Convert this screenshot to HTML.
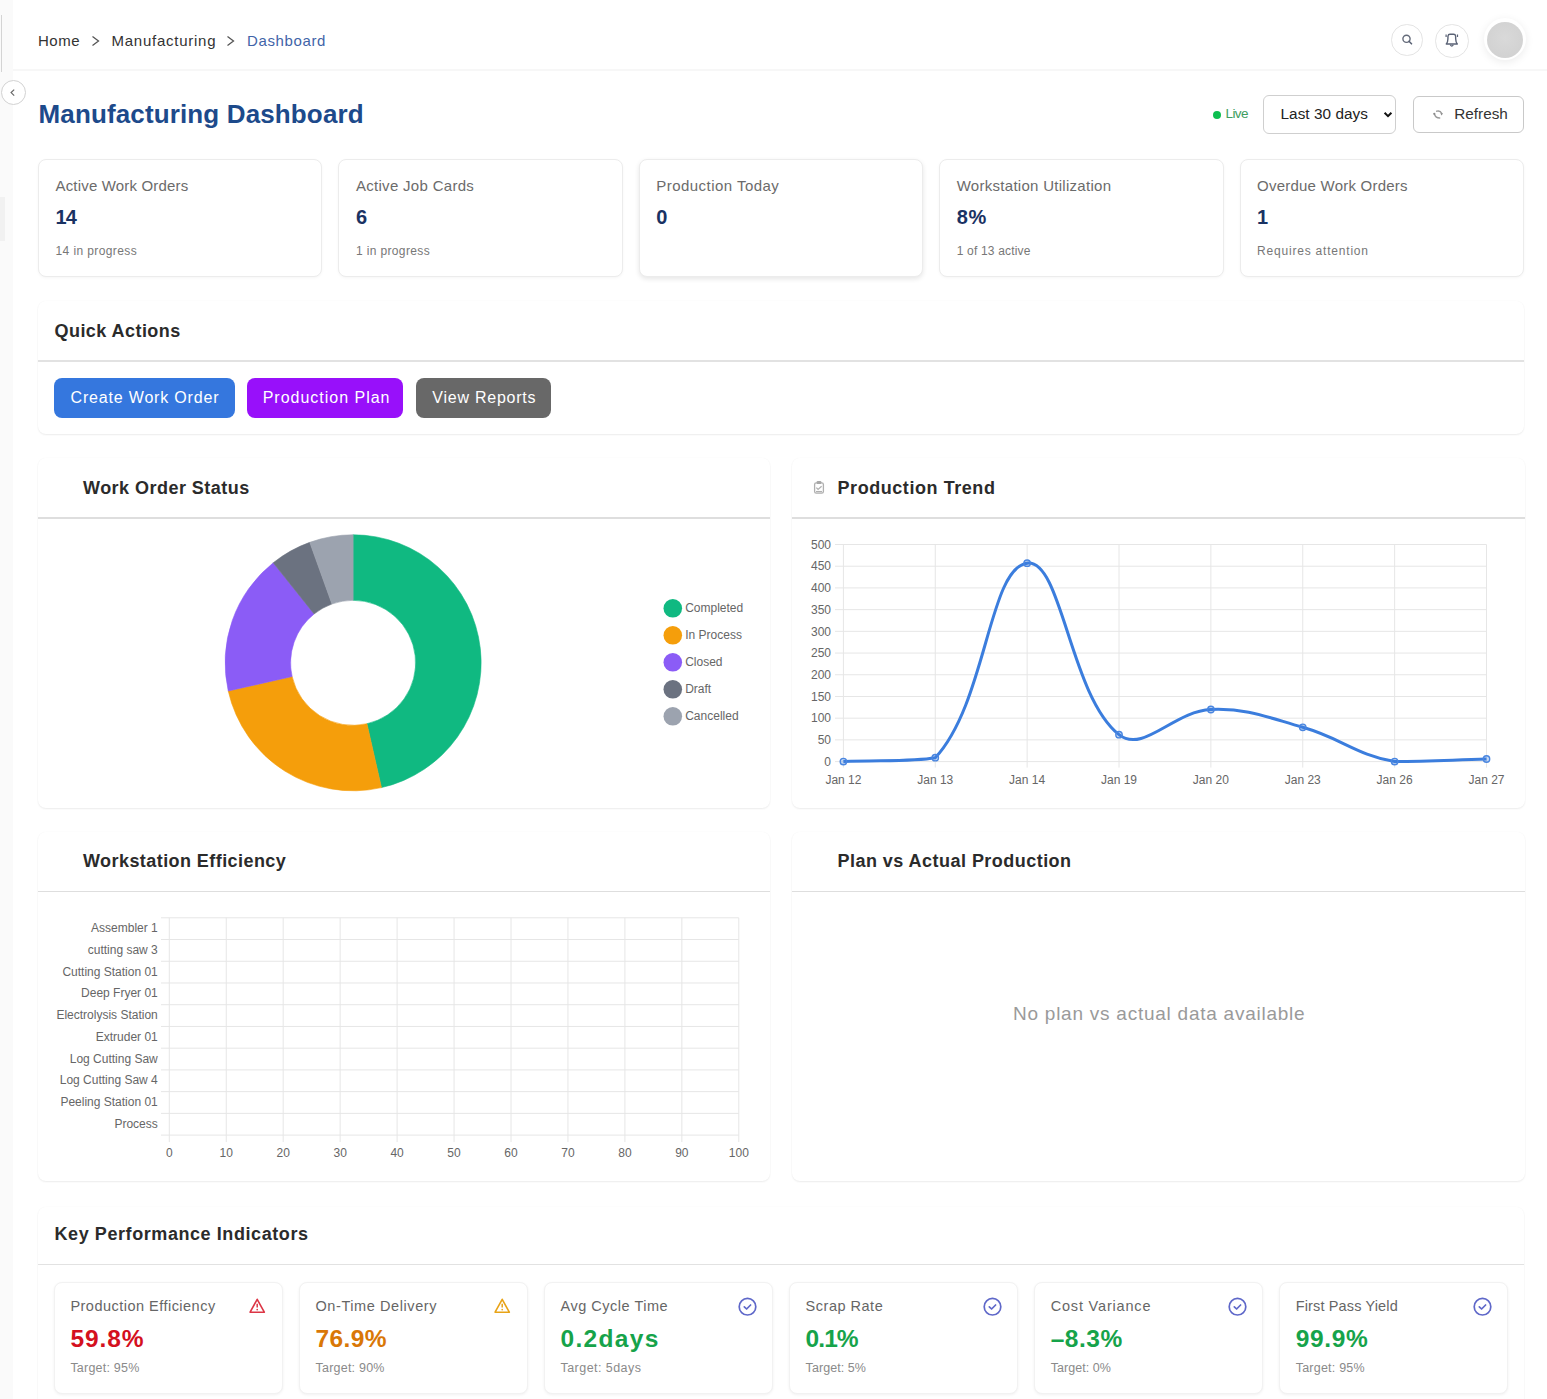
<!DOCTYPE html>
<html><head><meta charset="utf-8"><title>Manufacturing Dashboard</title>
<style>
html,body{margin:0;padding:0;}
body{width:1547px;height:1399px;position:relative;overflow:hidden;background:#fff;font-family:"Liberation Sans", sans-serif;}
.t{position:absolute;line-height:1;white-space:nowrap;}
</style></head><body>
<div style="position:absolute;left:0px;top:0px;width:13.4px;height:1399px;background:#fafafa;"></div>
<div style="position:absolute;left:1px;top:15px;width:1px;height:57px;background:#d4d4d4;"></div>
<div style="position:absolute;left:0px;top:197px;width:5.4px;height:44px;background:#f1f1f1;"></div>
<div style="position:absolute;left:13px;top:69px;width:1534px;height:2px;background:#f7f7f7;"></div>
<div class="t" style="left:38.00px;top:32.80px;font-size:15px;font-weight:400;color:#333;letter-spacing:0.533px;">Home</div>
<div class="t" style="left:111.50px;top:32.80px;font-size:15px;font-weight:400;color:#333;letter-spacing:0.75px;">Manufacturing</div>
<div class="t" style="left:247.00px;top:32.80px;font-size:15px;font-weight:400;color:#3f64a8;letter-spacing:0.625px;">Dashboard</div>
<svg style="position:absolute;left:0;top:0" width="400" height="70"><path d="M92.5 36.5 L98.5 41 L92.5 45.5" fill="none" stroke="#555" stroke-width="1.3"/><path d="M227.5 36.5 L233.5 41 L227.5 45.5" fill="none" stroke="#555" stroke-width="1.3"/></svg>
<div style="position:absolute;left:1391px;top:24px;width:31.5px;height:31.5px;border:1.5px solid #e4e4e4;border-radius:50%;box-sizing:border-box;background:#fff;"></div>
<div style="position:absolute;left:1435px;top:24px;width:33.5px;height:33.5px;border:1.5px solid #e4e4e4;border-radius:50%;box-sizing:border-box;background:#fff;"></div>
<svg style="position:absolute;left:1380px;top:10px" width="100" height="60"><circle cx="26.5" cy="28.8" r="3.6" fill="none" stroke="#646b7a" stroke-width="1.4"/><path d="M29 31.3 L31.5 33.8" stroke="#5a6275" stroke-width="1.6" stroke-linecap="round"/><g transform="translate(56,15)" fill="none" stroke="#5a6275" stroke-width="1.4" stroke-linejoin="round"><path d="M10.3 19 Q11.8 17.3 11.9 14 L12 11 Q12.2 9.3 14 9.3 L17.6 9.3 Q19.4 9.3 19.6 11 L19.7 14 Q19.8 17.3 21.3 19 Z"/><path d="M14.3 19.8 Q15.8 22.6 17.3 19.8" stroke-width="1.3"/><path d="M10.1 9.4 L10.1 12 M21.5 9.4 L21.5 12" stroke-width="1.2"/></g></svg>
<div style="position:absolute;left:1484px;top:18px;width:42px;height:42px;border-radius:50%;background:#fff;box-shadow:0 2px 8px rgba(0,0,0,0.08);"></div>
<div style="position:absolute;left:1487px;top:21.5px;width:36px;height:36px;border-radius:50%;background:radial-gradient(circle at 50% 45%, #d9d9d9 0, #d3d3d3 60%, #cfcfcf 100%);"></div>
<div style="position:absolute;left:0.5px;top:80px;width:25px;height:25px;border:1.3px solid #d2d2d2;border-radius:50%;box-sizing:border-box;background:#fff;"></div>
<svg style="position:absolute;left:0;top:80px" width="26" height="26"><path d="M14.2 9.6 L11.1 12.6 L14.2 15.6" fill="none" stroke="#666" stroke-width="1.2"/></svg>
<div class="t" style="left:38.50px;top:100.79px;font-size:26px;font-weight:700;color:#1d4a8b;letter-spacing:0.136px;">Manufacturing Dashboard</div>
<div style="position:absolute;left:1212.8px;top:110.5px;width:8px;height:8px;border-radius:50%;background:#0dbf50;"></div>
<div class="t" style="left:1225.50px;top:107.37px;font-size:13.5px;font-weight:400;color:#3f9d60;letter-spacing:-0.567px;">Live</div>
<div style="position:absolute;left:1263.3px;top:94.7px;width:133px;height:39.6px;border:1px solid #cfcfcf;border-radius:6px;box-sizing:border-box;background:#fff;"></div>
<div class="t" style="left:1280.50px;top:106.45px;font-size:15.3px;font-weight:400;color:#222;letter-spacing:0.064px;">Last 30 days</div>
<svg style="position:absolute;left:1380px;top:105px" width="20" height="20"><path d="M4.6 7.8 L8 11.2 L11.4 7.8" fill="none" stroke="#111" stroke-width="2"/></svg>
<div style="position:absolute;left:1413.2px;top:96px;width:110.5px;height:37px;border:1px solid #c9c9c9;border-radius:6px;box-sizing:border-box;background:#fff;"></div>
<svg style="position:absolute;left:1425px;top:100px" width="30" height="30"><g fill="none" stroke="#9a9a9a" stroke-width="1.4" stroke-linecap="round"><path d="M11.7 11.2 Q15.3 10.2 16.6 13.2"/><path d="M9.4 14 Q10.6 18 14.7 18"/></g><path d="M15.3 13.3 L18 13.3 L16.6 15.6 Z" fill="#8a8a8a"/><circle cx="9.3" cy="13.8" r="1.1" fill="#8a8a8a"/></svg>
<div class="t" style="left:1454.30px;top:106.45px;font-size:15.3px;font-weight:400;color:#333;">Refresh</div>
<div style="position:absolute;left:38.0px;top:159px;width:284.4px;height:117.5px;border:1px solid #ececec;border-radius:8px;box-sizing:border-box;background:#fff;box-shadow:0 1px 3px rgba(0,0,0,0.04);"></div>
<div class="t" style="left:55.50px;top:178.00px;font-size:15px;font-weight:400;color:#6b6b6b;letter-spacing:0.176px;">Active Work Orders</div>
<div class="t" style="left:55.50px;top:207.37px;font-size:20px;font-weight:700;color:#1a3263;letter-spacing:-0.9px;">14</div>
<div class="t" style="left:55.50px;top:244.54px;font-size:12px;font-weight:400;color:#777;letter-spacing:0.4px;">14 in progress</div>
<div style="position:absolute;left:338.4px;top:159px;width:284.4px;height:117.5px;border:1px solid #ececec;border-radius:8px;box-sizing:border-box;background:#fff;box-shadow:0 1px 3px rgba(0,0,0,0.04);"></div>
<div class="t" style="left:355.90px;top:178.00px;font-size:15px;font-weight:400;color:#6b6b6b;letter-spacing:0.307px;">Active Job Cards</div>
<div class="t" style="left:355.90px;top:207.37px;font-size:20px;font-weight:700;color:#1a3263;">6</div>
<div class="t" style="left:355.90px;top:244.54px;font-size:12px;font-weight:400;color:#777;letter-spacing:0.367px;">1 in progress</div>
<div style="position:absolute;left:638.8px;top:159px;width:284.4px;height:117.5px;border:1px solid #ececec;border-radius:8px;box-sizing:border-box;background:#fff;box-shadow:0 2px 5px rgba(0,0,0,0.10);"></div>
<div class="t" style="left:656.30px;top:178.00px;font-size:15px;font-weight:400;color:#6b6b6b;letter-spacing:0.46px;">Production Today</div>
<div class="t" style="left:656.30px;top:207.37px;font-size:20px;font-weight:700;color:#1a3263;">0</div>
<div style="position:absolute;left:939.2px;top:159px;width:284.4px;height:117.5px;border:1px solid #ececec;border-radius:8px;box-sizing:border-box;background:#fff;box-shadow:0 1px 3px rgba(0,0,0,0.04);"></div>
<div class="t" style="left:956.70px;top:178.00px;font-size:15px;font-weight:400;color:#6b6b6b;letter-spacing:0.282px;">Workstation Utilization</div>
<div class="t" style="left:956.70px;top:207.37px;font-size:20px;font-weight:700;color:#1a3263;letter-spacing:0.8px;">8%</div>
<div class="t" style="left:956.70px;top:244.54px;font-size:12px;font-weight:400;color:#777;letter-spacing:0.185px;">1 of 13 active</div>
<div style="position:absolute;left:1239.6px;top:159px;width:284.4px;height:117.5px;border:1px solid #ececec;border-radius:8px;box-sizing:border-box;background:#fff;box-shadow:0 1px 3px rgba(0,0,0,0.04);"></div>
<div class="t" style="left:1257.10px;top:178.00px;font-size:15px;font-weight:400;color:#6b6b6b;letter-spacing:0.222px;">Overdue Work Orders</div>
<div class="t" style="left:1257.10px;top:207.37px;font-size:20px;font-weight:700;color:#1a3263;">1</div>
<div class="t" style="left:1257.10px;top:244.54px;font-size:12px;font-weight:400;color:#777;letter-spacing:0.794px;">Requires attention</div>
<div style="position:absolute;left:37.5px;top:301px;width:1486.5px;height:133px;border-radius:8px;background:#fff;box-shadow:0 1px 2px rgba(0,0,0,0.07),0 0 2px rgba(0,0,0,0.03);"></div>
<div style="position:absolute;left:37.5px;top:360px;width:1486.5px;height:1.5px;background:#e2e2e2;"></div>
<div class="t" style="left:54.50px;top:321.66px;font-size:18px;font-weight:700;color:#2b2b2b;letter-spacing:0.45px;">Quick Actions</div>
<div style="position:absolute;left:54.2px;top:377.5px;width:180.6px;height:40px;background:#3577de;border-radius:8px;"></div>
<div class="t" style="left:70.50px;top:389.96px;font-size:16px;font-weight:400;color:#fff;letter-spacing:0.825px;">Create Work Order</div>
<div style="position:absolute;left:247.2px;top:377.5px;width:156.3px;height:40px;background:#9810fa;border-radius:8px;"></div>
<div class="t" style="left:262.70px;top:389.96px;font-size:16px;font-weight:400;color:#fff;letter-spacing:0.986px;">Production Plan</div>
<div style="position:absolute;left:416px;top:377.5px;width:134.8px;height:40px;background:#686868;border-radius:8px;"></div>
<div class="t" style="left:432.30px;top:389.96px;font-size:16px;font-weight:400;color:#fff;letter-spacing:0.764px;">View Reports</div>
<div style="position:absolute;left:37.5px;top:458px;width:732.5px;height:349.5px;border-radius:8px;background:#fff;box-shadow:0 1px 2px rgba(0,0,0,0.07),0 0 2px rgba(0,0,0,0.03);"></div>
<div style="position:absolute;left:37.5px;top:517.4px;width:732.5px;height:1.5px;background:#dedede;"></div>
<div class="t" style="left:83.00px;top:478.76px;font-size:18px;font-weight:700;color:#2b2b2b;letter-spacing:0.469px;">Work Order Status</div>
<div style="position:absolute;left:792px;top:458px;width:732.5px;height:349.5px;border-radius:8px;background:#fff;box-shadow:0 1px 2px rgba(0,0,0,0.07),0 0 2px rgba(0,0,0,0.03);"></div>
<div style="position:absolute;left:792px;top:517.4px;width:732.5px;height:1.5px;background:#dedede;"></div>
<div class="t" style="left:837.50px;top:478.76px;font-size:18px;font-weight:700;color:#2b2b2b;letter-spacing:0.56px;">Production Trend</div>
<div style="position:absolute;left:37.5px;top:831.5px;width:732.5px;height:349px;border-radius:8px;background:#fff;box-shadow:0 1px 2px rgba(0,0,0,0.07),0 0 2px rgba(0,0,0,0.03);"></div>
<div style="position:absolute;left:37.5px;top:890.9px;width:732.5px;height:1.5px;background:#dedede;"></div>
<div class="t" style="left:83.00px;top:852.26px;font-size:18px;font-weight:700;color:#2b2b2b;letter-spacing:0.433px;">Workstation Efficiency</div>
<div style="position:absolute;left:792px;top:831.5px;width:732.5px;height:349px;border-radius:8px;background:#fff;box-shadow:0 1px 2px rgba(0,0,0,0.07),0 0 2px rgba(0,0,0,0.03);"></div>
<div style="position:absolute;left:792px;top:890.9px;width:732.5px;height:1.5px;background:#dedede;"></div>
<div class="t" style="left:837.50px;top:852.26px;font-size:18px;font-weight:700;color:#2b2b2b;letter-spacing:0.467px;">Plan vs Actual Production</div>
<div class="t" style="left:1013.00px;top:1003.72px;font-size:19px;font-weight:400;color:#9a9a9a;letter-spacing:0.752px;">No plan vs actual data available</div>
<div style="position:absolute;left:37.5px;top:1207px;width:1486.5px;height:260px;border-radius:8px;background:#fff;box-shadow:0 1px 2px rgba(0,0,0,0.07),0 0 2px rgba(0,0,0,0.03);"></div>
<div style="position:absolute;left:37.5px;top:1263.5px;width:1486.5px;height:1.5px;background:#e2e2e2;"></div>
<div class="t" style="left:54.50px;top:1224.86px;font-size:18px;font-weight:700;color:#2b2b2b;letter-spacing:0.576px;">Key Performance Indicators</div>
<div style="position:absolute;left:53.6px;top:1281.5px;width:229.07px;height:112.3px;border:1px solid #f2f2f2;box-sizing:border-box;border-radius:8px;background:#fff;box-shadow:0 1px 3px rgba(0,0,0,0.06);"></div>
<div class="t" style="left:70.40px;top:1299.43px;font-size:14.5px;font-weight:400;color:#666;letter-spacing:0.48px;">Production Efficiency</div>
<div class="t" style="left:70.40px;top:1327.26px;font-size:24.5px;font-weight:700;color:#d4101e;letter-spacing:0.9px;">59.8%</div>
<div class="t" style="left:70.40px;top:1362.02px;font-size:12.5px;font-weight:400;color:#8a8a8a;letter-spacing:0.22px;">Target: 95%</div>
<svg style="position:absolute;left:246.67px;top:1296px" width="20" height="20"><path d="M10.2 3.3 L17.3 16.2 L3.1 16.2 Z" fill="none" stroke="#dc3545" stroke-width="1.6" stroke-linejoin="round"/><path d="M10.2 7.8 L10.2 11.4" stroke="#dc3545" stroke-width="1.5"/><circle cx="10.2" cy="13.6" r="0.85" fill="#dc3545"/></svg>
<div style="position:absolute;left:298.67px;top:1281.5px;width:229.07px;height:112.3px;border:1px solid #f2f2f2;box-sizing:border-box;border-radius:8px;background:#fff;box-shadow:0 1px 3px rgba(0,0,0,0.06);"></div>
<div class="t" style="left:315.47px;top:1299.43px;font-size:14.5px;font-weight:400;color:#666;letter-spacing:0.587px;">On-Time Delivery</div>
<div class="t" style="left:315.47px;top:1327.26px;font-size:24.5px;font-weight:700;color:#d97706;letter-spacing:0.375px;">76.9%</div>
<div class="t" style="left:315.47px;top:1362.02px;font-size:12.5px;font-weight:400;color:#8a8a8a;letter-spacing:0.23px;">Target: 90%</div>
<svg style="position:absolute;left:491.73px;top:1296px" width="20" height="20"><path d="M10.2 3.3 L17.3 16.2 L3.1 16.2 Z" fill="none" stroke="#e8a317" stroke-width="1.6" stroke-linejoin="round"/><path d="M10.2 7.8 L10.2 11.4" stroke="#e8a317" stroke-width="1.5"/><circle cx="10.2" cy="13.6" r="0.85" fill="#e8a317"/></svg>
<div style="position:absolute;left:543.73px;top:1281.5px;width:229.07px;height:112.3px;border:1px solid #f2f2f2;box-sizing:border-box;border-radius:8px;background:#fff;box-shadow:0 1px 3px rgba(0,0,0,0.06);"></div>
<div class="t" style="left:560.53px;top:1299.43px;font-size:14.5px;font-weight:400;color:#666;letter-spacing:0.515px;">Avg Cycle Time</div>
<div class="t" style="left:560.53px;top:1327.26px;font-size:24.5px;font-weight:700;color:#16a34a;letter-spacing:1.317px;">0.2days</div>
<div class="t" style="left:560.53px;top:1362.02px;font-size:12.5px;font-weight:400;color:#8a8a8a;letter-spacing:0.45px;">Target: 5days</div>
<svg style="position:absolute;left:736.80px;top:1296px" width="22" height="22"><circle cx="10.5" cy="10.7" r="8.3" fill="none" stroke="#5f68c9" stroke-width="1.7"/><path d="M7.3 10.8 L9.6 13 L13.6 9" fill="none" stroke="#5f68c9" stroke-width="1.7" stroke-linecap="round" stroke-linejoin="round"/></svg>
<div style="position:absolute;left:788.8px;top:1281.5px;width:229.07px;height:112.3px;border:1px solid #f2f2f2;box-sizing:border-box;border-radius:8px;background:#fff;box-shadow:0 1px 3px rgba(0,0,0,0.06);"></div>
<div class="t" style="left:805.60px;top:1299.43px;font-size:14.5px;font-weight:400;color:#666;letter-spacing:0.511px;">Scrap Rate</div>
<div class="t" style="left:805.60px;top:1327.26px;font-size:24.5px;font-weight:700;color:#16a34a;letter-spacing:-0.933px;">0.1%</div>
<div class="t" style="left:805.60px;top:1362.02px;font-size:12.5px;font-weight:400;color:#8a8a8a;letter-spacing:0.056px;">Target: 5%</div>
<svg style="position:absolute;left:981.87px;top:1296px" width="22" height="22"><circle cx="10.5" cy="10.7" r="8.3" fill="none" stroke="#5f68c9" stroke-width="1.7"/><path d="M7.3 10.8 L9.6 13 L13.6 9" fill="none" stroke="#5f68c9" stroke-width="1.7" stroke-linecap="round" stroke-linejoin="round"/></svg>
<div style="position:absolute;left:1033.87px;top:1281.5px;width:229.07px;height:112.3px;border:1px solid #f2f2f2;box-sizing:border-box;border-radius:8px;background:#fff;box-shadow:0 1px 3px rgba(0,0,0,0.06);"></div>
<div class="t" style="left:1050.67px;top:1299.43px;font-size:14.5px;font-weight:400;color:#666;letter-spacing:0.817px;">Cost Variance</div>
<div class="t" style="left:1050.67px;top:1327.26px;font-size:24.5px;font-weight:700;color:#16a34a;letter-spacing:0.525px;">–8.3%</div>
<div class="t" style="left:1050.67px;top:1362.02px;font-size:12.5px;font-weight:400;color:#8a8a8a;letter-spacing:0.056px;">Target: 0%</div>
<svg style="position:absolute;left:1226.93px;top:1296px" width="22" height="22"><circle cx="10.5" cy="10.7" r="8.3" fill="none" stroke="#5f68c9" stroke-width="1.7"/><path d="M7.3 10.8 L9.6 13 L13.6 9" fill="none" stroke="#5f68c9" stroke-width="1.7" stroke-linecap="round" stroke-linejoin="round"/></svg>
<div style="position:absolute;left:1278.93px;top:1281.5px;width:229.07px;height:112.3px;border:1px solid #f2f2f2;box-sizing:border-box;border-radius:8px;background:#fff;box-shadow:0 1px 3px rgba(0,0,0,0.06);"></div>
<div class="t" style="left:1295.73px;top:1299.43px;font-size:14.5px;font-weight:400;color:#666;letter-spacing:0.14px;">First Pass Yield</div>
<div class="t" style="left:1295.73px;top:1327.26px;font-size:24.5px;font-weight:700;color:#16a34a;letter-spacing:0.65px;">99.9%</div>
<div class="t" style="left:1295.73px;top:1362.02px;font-size:12.5px;font-weight:400;color:#8a8a8a;letter-spacing:0.22px;">Target: 95%</div>
<svg style="position:absolute;left:1472.00px;top:1296px" width="22" height="22"><circle cx="10.5" cy="10.7" r="8.3" fill="none" stroke="#5f68c9" stroke-width="1.7"/><path d="M7.3 10.8 L9.6 13 L13.6 9" fill="none" stroke="#5f68c9" stroke-width="1.7" stroke-linecap="round" stroke-linejoin="round"/></svg>
<svg style="position:absolute;left:0;top:0;" width="1547" height="1399"><g fill="none" stroke="#b0b0b0" stroke-width="1.3"><rect x="814.6" y="482.9" width="8.8" height="10.3" rx="1.6"/><path d="M816.3 487.6 L818.1 489.4 L821.6 486.3"/><path d="M816 491.6 L822 491.6"/></g><rect x="816.6" y="480.9" width="4.8" height="3.2" rx="1.2" fill="#a8a8a8"/><path d="M353.10 534.80 A128 128 0 0 1 381.46 787.62 L366.95 723.75 A62.5 62.5 0 0 0 353.10 600.30 Z" fill="#10b981" stroke="#10b981" stroke-width="0.6"/><path d="M381.46 787.62 A128 128 0 0 1 228.23 690.94 L292.13 676.54 A62.5 62.5 0 0 0 366.95 723.75 Z" fill="#f59e0b" stroke="#f59e0b" stroke-width="0.6"/><path d="M228.23 690.94 A128 128 0 0 1 273.24 562.77 L314.11 613.95 A62.5 62.5 0 0 0 292.13 676.54 Z" fill="#8b5cf6" stroke="#8b5cf6" stroke-width="0.6"/><path d="M273.24 562.77 A128 128 0 0 1 309.74 542.37 L331.93 603.99 A62.5 62.5 0 0 0 314.11 613.95 Z" fill="#6b7280" stroke="#6b7280" stroke-width="0.6"/><path d="M309.74 542.37 A128 128 0 0 1 353.10 534.80 L353.10 600.30 A62.5 62.5 0 0 0 331.93 603.99 Z" fill="#9ca3af" stroke="#9ca3af" stroke-width="0.6"/><circle cx="672.8" cy="608.3" r="9.3" fill="#10b981"/><text x="685.2" y="611.6" font-size="12" fill="#666" font-family="Liberation Sans, sans-serif">Completed</text><circle cx="672.8" cy="635.3" r="9.3" fill="#f59e0b"/><text x="685.2" y="638.6" font-size="12" fill="#666" font-family="Liberation Sans, sans-serif">In Process</text><circle cx="672.8" cy="662.3" r="9.3" fill="#8b5cf6"/><text x="685.2" y="665.6" font-size="12" fill="#666" font-family="Liberation Sans, sans-serif">Closed</text><circle cx="672.8" cy="689.3" r="9.3" fill="#6b7280"/><text x="685.2" y="692.6" font-size="12" fill="#666" font-family="Liberation Sans, sans-serif">Draft</text><circle cx="672.8" cy="716.3" r="9.3" fill="#9ca3af"/><text x="685.2" y="719.6" font-size="12" fill="#666" font-family="Liberation Sans, sans-serif">Cancelled</text><line x1="835" y1="761.60" x2="1486.5" y2="761.60" stroke="#e6e6e6" stroke-width="1"/><text x="831" y="765.80" font-size="12" fill="#666" text-anchor="end" font-family="Liberation Sans, sans-serif">0</text><line x1="835" y1="739.89" x2="1486.5" y2="739.89" stroke="#e6e6e6" stroke-width="1"/><text x="831" y="744.09" font-size="12" fill="#666" text-anchor="end" font-family="Liberation Sans, sans-serif">50</text><line x1="835" y1="718.18" x2="1486.5" y2="718.18" stroke="#e6e6e6" stroke-width="1"/><text x="831" y="722.38" font-size="12" fill="#666" text-anchor="end" font-family="Liberation Sans, sans-serif">100</text><line x1="835" y1="696.47" x2="1486.5" y2="696.47" stroke="#e6e6e6" stroke-width="1"/><text x="831" y="700.67" font-size="12" fill="#666" text-anchor="end" font-family="Liberation Sans, sans-serif">150</text><line x1="835" y1="674.76" x2="1486.5" y2="674.76" stroke="#e6e6e6" stroke-width="1"/><text x="831" y="678.96" font-size="12" fill="#666" text-anchor="end" font-family="Liberation Sans, sans-serif">200</text><line x1="835" y1="653.05" x2="1486.5" y2="653.05" stroke="#e6e6e6" stroke-width="1"/><text x="831" y="657.25" font-size="12" fill="#666" text-anchor="end" font-family="Liberation Sans, sans-serif">250</text><line x1="835" y1="631.34" x2="1486.5" y2="631.34" stroke="#e6e6e6" stroke-width="1"/><text x="831" y="635.54" font-size="12" fill="#666" text-anchor="end" font-family="Liberation Sans, sans-serif">300</text><line x1="835" y1="609.63" x2="1486.5" y2="609.63" stroke="#e6e6e6" stroke-width="1"/><text x="831" y="613.83" font-size="12" fill="#666" text-anchor="end" font-family="Liberation Sans, sans-serif">350</text><line x1="835" y1="587.92" x2="1486.5" y2="587.92" stroke="#e6e6e6" stroke-width="1"/><text x="831" y="592.12" font-size="12" fill="#666" text-anchor="end" font-family="Liberation Sans, sans-serif">400</text><line x1="835" y1="566.21" x2="1486.5" y2="566.21" stroke="#e6e6e6" stroke-width="1"/><text x="831" y="570.41" font-size="12" fill="#666" text-anchor="end" font-family="Liberation Sans, sans-serif">450</text><line x1="835" y1="544.50" x2="1486.5" y2="544.50" stroke="#e6e6e6" stroke-width="1"/><text x="831" y="548.70" font-size="12" fill="#666" text-anchor="end" font-family="Liberation Sans, sans-serif">500</text><line x1="843.40" y1="544.5" x2="843.40" y2="767.6" stroke="#e6e6e6" stroke-width="1"/><text x="843.40" y="783.8" font-size="12" fill="#666" text-anchor="middle" font-family="Liberation Sans, sans-serif">Jan 12</text><line x1="935.27" y1="544.5" x2="935.27" y2="767.6" stroke="#e6e6e6" stroke-width="1"/><text x="935.27" y="783.8" font-size="12" fill="#666" text-anchor="middle" font-family="Liberation Sans, sans-serif">Jan 13</text><line x1="1027.14" y1="544.5" x2="1027.14" y2="767.6" stroke="#e6e6e6" stroke-width="1"/><text x="1027.14" y="783.8" font-size="12" fill="#666" text-anchor="middle" font-family="Liberation Sans, sans-serif">Jan 14</text><line x1="1119.01" y1="544.5" x2="1119.01" y2="767.6" stroke="#e6e6e6" stroke-width="1"/><text x="1119.01" y="783.8" font-size="12" fill="#666" text-anchor="middle" font-family="Liberation Sans, sans-serif">Jan 19</text><line x1="1210.89" y1="544.5" x2="1210.89" y2="767.6" stroke="#e6e6e6" stroke-width="1"/><text x="1210.89" y="783.8" font-size="12" fill="#666" text-anchor="middle" font-family="Liberation Sans, sans-serif">Jan 20</text><line x1="1302.76" y1="544.5" x2="1302.76" y2="767.6" stroke="#e6e6e6" stroke-width="1"/><text x="1302.76" y="783.8" font-size="12" fill="#666" text-anchor="middle" font-family="Liberation Sans, sans-serif">Jan 23</text><line x1="1394.63" y1="544.5" x2="1394.63" y2="767.6" stroke="#e6e6e6" stroke-width="1"/><text x="1394.63" y="783.8" font-size="12" fill="#666" text-anchor="middle" font-family="Liberation Sans, sans-serif">Jan 26</text><line x1="1486.50" y1="544.5" x2="1486.50" y2="767.6" stroke="#e6e6e6" stroke-width="1"/><text x="1486.50" y="783.8" font-size="12" fill="#666" text-anchor="middle" font-family="Liberation Sans, sans-serif">Jan 27</text><path d="M843.40 761.60 C880.15 760.04 913.26 761.60 935.27 757.69 C986.76 702.09 988.55 568.00 1027.14 563.17 C1062.05 558.80 1069.67 695.39 1119.01 734.68 C1143.17 753.92 1173.81 710.99 1210.89 709.50 C1247.31 708.03 1266.87 717.12 1302.76 727.30 C1340.37 737.96 1356.69 755.06 1394.63 761.60 C1430.19 761.60 1449.75 760.04 1486.50 758.99" fill="none" stroke="#3b7ddd" stroke-width="3"/><circle cx="843.40" cy="761.60" r="3.2" fill="rgba(59,125,221,0.3)" stroke="#4a86e0" stroke-width="1.4"/><circle cx="935.27" cy="757.69" r="3.2" fill="rgba(59,125,221,0.3)" stroke="#4a86e0" stroke-width="1.4"/><circle cx="1027.14" cy="563.17" r="3.2" fill="rgba(59,125,221,0.3)" stroke="#4a86e0" stroke-width="1.4"/><circle cx="1119.01" cy="734.68" r="3.2" fill="rgba(59,125,221,0.3)" stroke="#4a86e0" stroke-width="1.4"/><circle cx="1210.89" cy="709.50" r="3.2" fill="rgba(59,125,221,0.3)" stroke="#4a86e0" stroke-width="1.4"/><circle cx="1302.76" cy="727.30" r="3.2" fill="rgba(59,125,221,0.3)" stroke="#4a86e0" stroke-width="1.4"/><circle cx="1394.63" cy="761.60" r="3.2" fill="rgba(59,125,221,0.3)" stroke="#4a86e0" stroke-width="1.4"/><circle cx="1486.50" cy="758.99" r="3.2" fill="rgba(59,125,221,0.3)" stroke="#4a86e0" stroke-width="1.4"/><line x1="161" y1="917.80" x2="738.8" y2="917.80" stroke="#e6e6e6" stroke-width="1"/><line x1="161" y1="939.53" x2="738.8" y2="939.53" stroke="#e6e6e6" stroke-width="1"/><line x1="161" y1="961.26" x2="738.8" y2="961.26" stroke="#e6e6e6" stroke-width="1"/><line x1="161" y1="982.99" x2="738.8" y2="982.99" stroke="#e6e6e6" stroke-width="1"/><line x1="161" y1="1004.72" x2="738.8" y2="1004.72" stroke="#e6e6e6" stroke-width="1"/><line x1="161" y1="1026.45" x2="738.8" y2="1026.45" stroke="#e6e6e6" stroke-width="1"/><line x1="161" y1="1048.18" x2="738.8" y2="1048.18" stroke="#e6e6e6" stroke-width="1"/><line x1="161" y1="1069.91" x2="738.8" y2="1069.91" stroke="#e6e6e6" stroke-width="1"/><line x1="161" y1="1091.64" x2="738.8" y2="1091.64" stroke="#e6e6e6" stroke-width="1"/><line x1="161" y1="1113.37" x2="738.8" y2="1113.37" stroke="#e6e6e6" stroke-width="1"/><line x1="161" y1="1135.10" x2="738.8" y2="1135.10" stroke="#e6e6e6" stroke-width="1"/><line x1="169.30" y1="917.8" x2="169.30" y2="1142.1" stroke="#e6e6e6" stroke-width="1"/><text x="169.30" y="1156.8" font-size="12" fill="#666" text-anchor="middle" font-family="Liberation Sans, sans-serif">0</text><line x1="226.25" y1="917.8" x2="226.25" y2="1142.1" stroke="#e6e6e6" stroke-width="1"/><text x="226.25" y="1156.8" font-size="12" fill="#666" text-anchor="middle" font-family="Liberation Sans, sans-serif">10</text><line x1="283.20" y1="917.8" x2="283.20" y2="1142.1" stroke="#e6e6e6" stroke-width="1"/><text x="283.20" y="1156.8" font-size="12" fill="#666" text-anchor="middle" font-family="Liberation Sans, sans-serif">20</text><line x1="340.15" y1="917.8" x2="340.15" y2="1142.1" stroke="#e6e6e6" stroke-width="1"/><text x="340.15" y="1156.8" font-size="12" fill="#666" text-anchor="middle" font-family="Liberation Sans, sans-serif">30</text><line x1="397.10" y1="917.8" x2="397.10" y2="1142.1" stroke="#e6e6e6" stroke-width="1"/><text x="397.10" y="1156.8" font-size="12" fill="#666" text-anchor="middle" font-family="Liberation Sans, sans-serif">40</text><line x1="454.05" y1="917.8" x2="454.05" y2="1142.1" stroke="#e6e6e6" stroke-width="1"/><text x="454.05" y="1156.8" font-size="12" fill="#666" text-anchor="middle" font-family="Liberation Sans, sans-serif">50</text><line x1="511.00" y1="917.8" x2="511.00" y2="1142.1" stroke="#e6e6e6" stroke-width="1"/><text x="511.00" y="1156.8" font-size="12" fill="#666" text-anchor="middle" font-family="Liberation Sans, sans-serif">60</text><line x1="567.95" y1="917.8" x2="567.95" y2="1142.1" stroke="#e6e6e6" stroke-width="1"/><text x="567.95" y="1156.8" font-size="12" fill="#666" text-anchor="middle" font-family="Liberation Sans, sans-serif">70</text><line x1="624.90" y1="917.8" x2="624.90" y2="1142.1" stroke="#e6e6e6" stroke-width="1"/><text x="624.90" y="1156.8" font-size="12" fill="#666" text-anchor="middle" font-family="Liberation Sans, sans-serif">80</text><line x1="681.85" y1="917.8" x2="681.85" y2="1142.1" stroke="#e6e6e6" stroke-width="1"/><text x="681.85" y="1156.8" font-size="12" fill="#666" text-anchor="middle" font-family="Liberation Sans, sans-serif">90</text><line x1="738.80" y1="917.8" x2="738.80" y2="1142.1" stroke="#e6e6e6" stroke-width="1"/><text x="738.80" y="1156.8" font-size="12" fill="#666" text-anchor="middle" font-family="Liberation Sans, sans-serif">100</text><text x="157.8" y="932.16" font-size="12" fill="#666" text-anchor="end" font-family="Liberation Sans, sans-serif">Assembler 1</text><text x="157.8" y="953.89" font-size="12" fill="#666" text-anchor="end" font-family="Liberation Sans, sans-serif">cutting saw 3</text><text x="157.8" y="975.62" font-size="12" fill="#666" text-anchor="end" font-family="Liberation Sans, sans-serif">Cutting Station 01</text><text x="157.8" y="997.35" font-size="12" fill="#666" text-anchor="end" font-family="Liberation Sans, sans-serif">Deep Fryer 01</text><text x="157.8" y="1019.08" font-size="12" fill="#666" text-anchor="end" font-family="Liberation Sans, sans-serif">Electrolysis Station</text><text x="157.8" y="1040.82" font-size="12" fill="#666" text-anchor="end" font-family="Liberation Sans, sans-serif">Extruder 01</text><text x="157.8" y="1062.54" font-size="12" fill="#666" text-anchor="end" font-family="Liberation Sans, sans-serif">Log Cutting Saw</text><text x="157.8" y="1084.27" font-size="12" fill="#666" text-anchor="end" font-family="Liberation Sans, sans-serif">Log Cutting Saw 4</text><text x="157.8" y="1106.00" font-size="12" fill="#666" text-anchor="end" font-family="Liberation Sans, sans-serif">Peeling Station 01</text><text x="157.8" y="1127.73" font-size="12" fill="#666" text-anchor="end" font-family="Liberation Sans, sans-serif">Process</text></svg>
</body></html>
